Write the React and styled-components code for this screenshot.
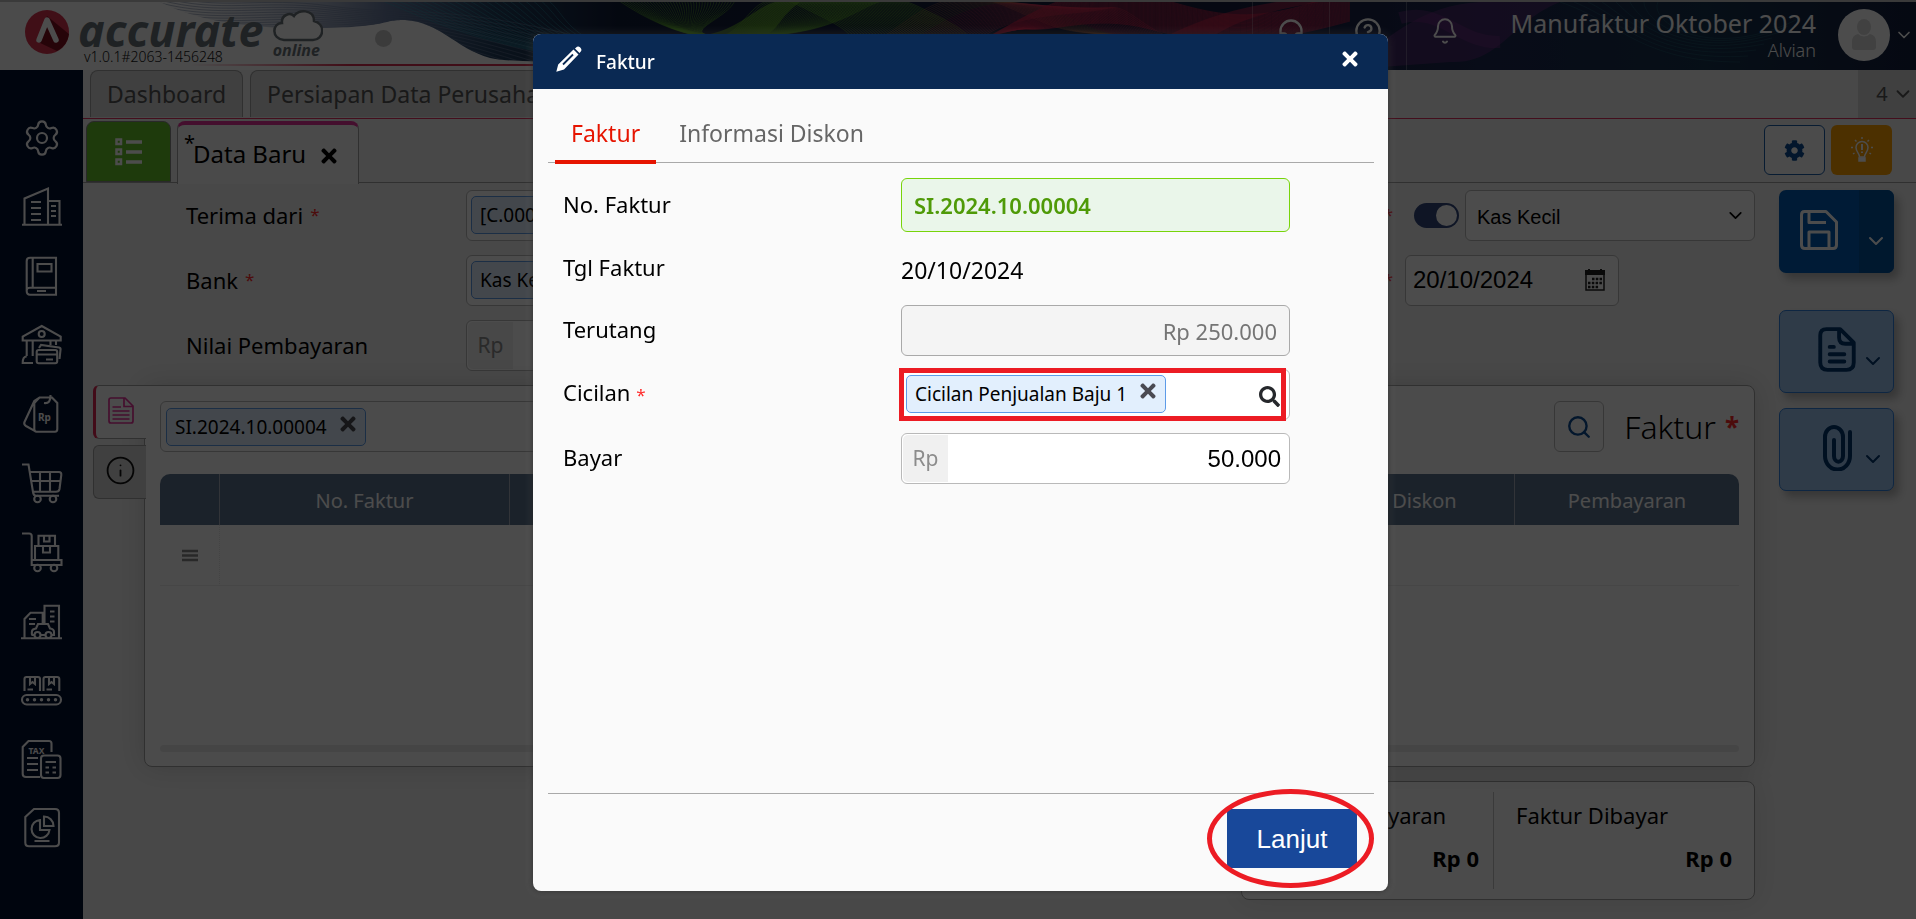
import React from "react";
import styled, { createGlobalStyle, css } from "styled-components";
import { Settings, ChevronDown, Bell, Headphones, CircleHelp, Search, Info } from "lucide-react";
import { FaTimes, FaSearch, FaCog } from "react-icons/fa";

const SANS = `"Noto Sans", "Open Sans", sans-serif`;
const ARIAL = `"Liberation Sans", Arial, sans-serif`;

const GlobalStyle = createGlobalStyle`
  *, *::before, *::after { box-sizing: border-box; }
  html, body { margin: 0; height: 100%; }
  body { font-family: ${SANS}; font-size: 22px; line-height: 30px; color: #000; background: #f1f1f1; overflow: hidden; }
  #root { height: 100%; }
  button, input, select { font: inherit; color: inherit; margin: 0; }
  button { border: 0; padding: 0; background: none; cursor: pointer; }
  a { color: inherit; text-decoration: none; }
  svg { display: block; flex: none; }
`;

/* ---------- page frame ---------- */

const Page = styled.div`
  min-height: 100%;
  display: flex;
  flex-direction: column;
`;
const Header = styled.header`
  position: relative;
  height: 70px;
  display: flex;
  justify-content: space-between;
  background: #fbfbfb;
  border-top: 2px solid #c2c2c2;
`;
const Banner = styled.svg`
  position: absolute;
  inset: 0;
  width: 100%;
  height: 68px;
`;
const Brand = styled.a`
  position: relative;
  display: grid;
  grid-template-columns: 44px auto auto;
  align-items: start;
  column-gap: 9px;
  padding: 8px 0 0 25px;
`;
const BrandText = styled.div`
  display: flex;
  flex-direction: column;
`;
const BrandName = styled.span`
  font: italic 700 45px/40px ${SANS};
  color: #6a7378;
`;
const Version = styled.span`
  padding-left: 6px;
  font-size: 14px;
  font-weight: 300;
  line-height: 14px;
  color: #111;
`;
const CloudBox = styled.span`
  display: flex;
  flex-direction: column;
  font: italic 700 16px/12px ${SANS};
  color: #6a7378;
  padding-right: 52px;
`;
const Dot = styled.span`
  width: 17px;
  height: 17px;
  margin-top: 28px;
  border-radius: 50%;
  background: #c6c6c6;
`;
const BrandGroup = styled.div`
  display: flex;
  position: relative;
`;
const HeaderRight = styled.div`
  position: relative;
  display: flex;
  align-items: stretch;
  color: #fff;
`;
const HeaderButton = styled.button`
  width: 77px;
  padding-bottom: 10px;
  display: flex;
  align-items: center;
  justify-content: center;
  border-left: 1px solid rgba(255, 255, 255, 0.25);
  &:last-of-type { border-right: 1px solid rgba(255, 255, 255, 0.25); }
`;
const Company = styled.div`
  display: flex;
  flex-direction: column;
  align-items: flex-end;
  padding: 5px 22px 0 28px;
  font-size: 25px;
  line-height: 33px;
`;
const UserName = styled.span`
  font-size: 18px;
  font-weight: 300;
  line-height: 20px;
`;
const Account = styled.button`
  display: flex;
  align-items: center;
  gap: 4px;
  padding: 0 2px 2px 0;
`;
const Avatar = styled.span`
  width: 52px;
  height: 52px;
  border-radius: 50%;
  background: #fff;
  display: flex;
  align-items: center;
  justify-content: center;
`;
const Body = styled.div`
  flex: 1;
  display: flex;
`;
const Sidebar = styled.nav`
  width: 83px;
  flex: none;
  background: #00112f;
  padding-top: 48px;
  display: flex;
  flex-direction: column;
  align-items: center;
  gap: 29px;
`;
const SideLink = styled.a`
  display: block;
  width: 40px;
  height: 40px;
  color: #fff;
  svg { overflow: visible; }
`;
const Main = styled.main`
  flex: 1;
  min-width: 0;
`;

/* ---------- tabs ---------- */

const PageTabs = styled.div`
  display: flex;
  height: 49px;
  padding-left: 7px;
  gap: 7px;
  border-bottom: 1px solid #e0305e;
`;
const PageTab = styled.a`
  height: 47px;
  padding: 8px 16px;
  border: 1px solid #a0a0a0;
  border-bottom: 0;
  border-radius: 8px 8px 0 0;
  background: #d6d6d6;
  color: #555;
  font-size: 23px;
`;
const TabCount = styled.button`
  margin-left: auto;
  width: 58px;
  height: 48px;
  padding-left: 16px;
  display: flex;
  align-items: center;
  justify-content: center;
  gap: 4px;
  background: #d6d6d6;
  color: #555;
  font-size: 20px;
`;
const DocBar = styled.div`
  display: flex;
  height: 64px;
  padding: 2px 24px 0 3px;
  border-bottom: 1px solid #a0a0a0;
`;
const ListTab = styled.button`
  width: 85px;
  height: 61px;
  display: flex;
  align-items: center;
  justify-content: center;
  border: 1px solid #8a8a8a;
  border-radius: 8px 8px 0 0;
  background: #65c12b;
`;
const DocTab = styled.div`
  width: 182px;
  height: 63px;
  margin: 0 auto -1px 6px;
  padding: 8px 18px 0 6px;
  display: flex;
  background: #f9f9f9;
  border: 1px solid #a0a0a0;
  border-top: 4px solid #e5329a;
  border-bottom: 0;
  border-radius: 8px 8px 0 0;
  font-size: 24px;
  button { margin: 8px 0 0 auto; height: 30px; }
`;
const Unsaved = styled.span`
  width: 9px;
  line-height: 20px;
  font-size: 20px;
`;
const DocName = styled.span`
  padding-top: 3px;
  line-height: 36px;
`;
const ToolButton = styled.button`
  width: 61px;
  height: 50px;
  margin: 4px 0 0 6px;
  display: flex;
  align-items: center;
  justify-content: center;
  border-radius: 6px;
  ${(p) => (p.$warm
    ? css`background: #ffa100; color: #fff;`
    : css`border: 1px solid #1c5ea8; background: #fafafa; color: #0a4c94;`)}
`;

/* ---------- document ---------- */

const Doc = styled.div`
  display: flex;
  gap: 24px;
  padding: 7px 22px 0 10px;
`;
const DocMain = styled.div`
  flex: 1;
  min-width: 0;
`;
const Form = styled.div`
  display: grid;
  grid-template-columns: 280px minmax(0, 1fr) 200px 350px;
  row-gap: 14px;
  padding-left: 93px;
`;
const FieldLabel = styled.label`
  height: 51px;
  display: flex;
  align-items: center;
  padding: ${(p) => (p.$end ? "0 12px 2px 40px" : "0 0 2px")};
  justify-content: ${(p) => (p.$end ? "space-between" : "flex-start")};
  gap: 7px;
`;
const Star = styled.span`
  color: #ff2a2a;
  font-size: ${(p) => (p.$big ? "26px" : "17px")};
  font-weight: ${(p) => (p.$big ? 700 : 400)};
`;
const Control = styled.div`
  display: flex;
  align-items: center;
  height: 51px;
  width: ${(p) => p.$width || "auto"};
  padding: ${(p) => (p.$flush ? "1px" : "0 4px 2px")};
  border: 1px solid #b9b9b9;
  border-radius: 6px;
  background: #fff;
`;
const PlainInput = styled.input`
  flex: 1;
  min-width: 0;
  width: 100%;
  border: 0;
  outline: 0;
  padding: ${(p) => p.$pad || "0"};
  background: transparent;
  font-family: ${ARIAL};
  font-size: 24px;
  text-align: ${(p) => (p.$right ? "right" : "left")};
`;
const Chip = styled.span`
  display: flex;
  align-items: center;
  gap: 10px;
  height: 38px;
  padding: 0 6px 0 8px;
  border: 1px solid #5d9be8;
  border-radius: 5px;
  background: #e2effd;
  font-size: 19px;
  white-space: nowrap;
  svg { color: #4a4a52; margin-bottom: 5px; }
`;
const Prefix = styled.span`
  align-self: stretch;
  width: 45px;
  padding-bottom: 2px;
  display: flex;
  align-items: center;
  justify-content: center;
  border-radius: 5px 0 0 5px;
  background: #f0f0f0;
  color: #8c8c8c;
  font-size: 21px;
`;
const Inline = styled.div`
  display: flex;
  align-items: center;
  gap: 6px;
  padding-left: 9px;
`;
const Toggle = styled.input`
  appearance: none;
  width: 45px;
  height: 25px;
  flex: none;
  border-radius: 13px;
  background: #32497e;
  display: flex;
  justify-content: flex-end;
  align-items: center;
  padding-right: 2px;
  &::after {
    content: "";
    width: 21px;
    height: 21px;
    border-radius: 50%;
    background: #fff;
  }
`;
const SelectBox = styled.div`
  flex: 1;
  display: grid;
  align-items: center;
  > * { grid-area: 1 / 1; }
  svg { justify-self: end; margin-right: 9px; pointer-events: none; }
`;
const Select = styled.select`
  appearance: none;
  width: 100%;
  height: 51px;
  padding: 2px 11px 0;
  border: 1px solid #b9b9b9;
  border-radius: 6px;
  background: #fff;
  font-family: ${ARIAL};
  font-size: 20px;
`;
const CalendarButton = styled.button`
  margin-right: 9px;
`;

/* ---------- lines panel ---------- */

const PanelArea = styled.div`
  display: flex;
  margin-top: 14px;
`;
const SideTabs = styled.div`
  position: relative;
  width: 53px;
  margin-right: -2px;
  display: flex;
  flex-direction: column;
  gap: 6px;
`;
const SideTab = styled.button`
  height: 54px;
  padding-bottom: 4px;
  display: flex;
  align-items: center;
  justify-content: center;
  border: 1px solid #a0a0a0;
  border-right: 0;
  border-radius: 6px 0 0 6px;
  background: #d6d6d6;
  color: #111;
  ${(p) => p.$active && css`background: #fafafa; border-left: 3px solid #dd2550;`}
`;
const Panel = styled.section`
  flex: 1;
  min-width: 0;
  height: 382px;
  padding: 15px 15px 14px;
  display: flex;
  flex-direction: column;
  border: 1px solid #a0a0a0;
  border-radius: 0 8px 8px 8px;
  background: #fbfbfb;
  box-shadow: 0 0 28px rgba(0, 0, 0, 0.14);
`;
const PanelTop = styled.div`
  display: flex;
  align-items: center;
  gap: 20px;
  margin-bottom: 22px;
`;
const PickBox = styled.div`
  width: 50%;
  display: flex;
  align-items: center;
  height: 51px;
  padding: 0 5px;
  border: 1px solid #b9b9b9;
  border-radius: 6px;
`;
const SearchButton = styled.button`
  width: 50px;
  height: 51px;
  margin-left: auto;
  display: flex;
  align-items: center;
  justify-content: center;
  border: 1px solid #b9b9b9;
  border-radius: 6px;
  color: #0a4c94;
`;
const PanelTitle = styled.h2`
  margin: 0;
  display: flex;
  gap: 9px;
  font-size: 32px;
  font-weight: 300;
  line-height: 44px;
`;
const Table = styled.table`
  width: 100%;
  border-collapse: separate;
  border-spacing: 0;
  table-layout: fixed;
  th {
    height: 51px;
    padding: 3px 0 0;
    background: #5d748e;
    color: #fff;
    font-size: 20px;
    font-weight: 400;
  }
  th + th { border-left: 1px solid #a7b0bb; }
  th:first-child { border-radius: 10px 0 0 0; }
  th:last-child { border-radius: 0 10px 0 0; }
  td { height: 61px; padding: 0; border-bottom: 1px solid #eaeaea; }
  td + td { border-left: 1px dotted #e4e4e4; }
  td svg { margin: 0 auto; }
`;
const ScrollTrack = styled.div`
  height: 7px;
  margin-top: auto;
  border-radius: 4px;
  background: #e8e8e8;
`;
const Summary = styled.section`
  display: grid;
  grid-template-columns: 251px 1fr;
  width: 514px;
  height: 119px;
  margin: 14px 0 0 auto;
  padding: 10px 0;
  border: 1px solid #a0a0a0;
  border-radius: 8px;
  background: #fbfbfb;
  box-shadow: 0 0 28px rgba(0, 0, 0, 0.1);
`;
const SumCell = styled.div`
  display: flex;
  flex-direction: column;
  gap: 13px;
  padding: 8px 14px 0 22px;
  & + & { border-left: 1px solid #c4c4c4; padding-right: 22px; }
  strong { align-self: flex-end; }
`;
const Actions = styled.aside`
  width: 115px;
  display: flex;
  flex-direction: column;
  gap: 15px;
`;
const SaveButton = styled.div`
  display: flex;
  height: 83px;
  margin-bottom: 22px;
  border-radius: 7px;
  overflow: hidden;
  background: #005cb4;
  color: #fff;
  box-shadow: 5px 6px 8px rgba(0, 0, 0, 0.25);
  button { display: flex; align-items: center; justify-content: center; }
  button:first-child { width: 80px; padding-bottom: 3px; }
  button:last-child { flex: 1; padding: 18px 2px 0 0; background: #00509b; }
`;
const SideButton = styled.button`
  height: 83px;
  display: flex;
  align-items: center;
  justify-content: flex-end;
  gap: 5px;
  padding-right: 8px;
  border: 1px solid #2f80dc;
  border-radius: 7px;
  background: #9ec6f2;
  color: #00366f;
  box-shadow: 5px 6px 8px rgba(0, 0, 0, 0.25);
  > svg:first-child { margin-bottom: 4px; }
  > svg:last-child { margin-top: 18px; }
`;

/* ---------- dialog ---------- */

const Overlay = styled.div`
  position: fixed;
  inset: 0;
  display: flex;
  justify-content: center;
  align-items: flex-start;
  padding: 34px 0 0 5px;
  background: rgba(0, 0, 0, 0.7);
`;
const Dialog = styled.section`
  width: 855px;
  max-width: 96%;
  border-radius: 8px;
  overflow: hidden;
  background: #fafafa;
  box-shadow: 0 0 10px rgba(255, 255, 255, 0.12), 0 0 6px rgba(0, 0, 0, 0.6);
`;
const DialogHead = styled.header`
  display: flex;
  align-items: center;
  gap: 14px;
  height: 55px;
  padding: 0 27px 0 23px;
  background: #0a2953;
  color: #fff;
  h1 { margin: 0; font-size: 19px; font-weight: 500; }
  > svg { margin-bottom: 6px; }
  button { margin-left: auto; padding-bottom: 5px; }
`;
const DialogBody = styled.div`
  display: flex;
  flex-direction: column;
  padding: 0 14px 23px 15px;
`;
const DialogTabs = styled.div`
  display: flex;
  gap: 7px;
  height: 74px;
  padding: 18px 0 0 7px;
  border-bottom: 1px solid #a9a9a9;
`;
const DialogTab = styled.button`
  height: 57px;
  padding: 0 16px 2px;
  border-bottom: 4px solid transparent;
  color: #666;
  font-size: 23px;
  ${(p) => p.$active && css`color: #e61400; border-color: #e61400;`}
`;
const DialogForm = styled.div`
  display: flex;
  flex-direction: column;
  gap: 13px;
  min-height: 631px;
  padding: 15px 84px 0 15px;
  border-bottom: 1px solid #a9a9a9;
`;
const Row = styled.div`
  display: grid;
  grid-template-columns: minmax(0, 1fr) 389px;
  align-items: center;
  > label { padding-bottom: 3px; }
`;
const NumberInput = styled.input`
  width: 100%;
  height: 54px;
  padding: 0 12px;
  border: 1px solid #77d40a;
  border-radius: 6px;
  background: #eaf6ea;
  color: #4f9a08;
  font-weight: 600;
`;
const OwedInput = styled.input`
  width: 100%;
  height: 51px;
  padding: 0 12px;
  border: 1px solid #a9a9a9;
  border-radius: 6px;
  background: #f4f4f4;
  color: #757575;
  text-align: right;
`;
const DateText = styled.output`
  height: 47px;
  font-size: 23px;
  line-height: 50px;
`;
const Marked = styled.div`
  position: relative;
`;
const MarkBox = styled.span`
  position: absolute;
  inset: -1px 4px -1px -2px;
  border: 5px solid #ec1c24;
  pointer-events: none;
`;
const LookupButton = styled.button`
  margin-left: auto;
  padding: 6px 5px 0 0;
  color: #26282c;
`;
const DialogFoot = styled.footer`
  display: flex;
  justify-content: flex-end;
  padding: 15px 17px 0;
`;
const NextButton = styled.button`
  width: 130px;
  height: 59px;
  border-radius: 4px;
  background: #18489a;
  color: #fff;
  font-family: ${ARIAL};
  font-size: 26px;
`;
const MarkRing = styled.span`
  position: absolute;
  inset: -20px -17px -20px -20px;
  border: 5px solid #ec1c24;
  border-radius: 50%;
  pointer-events: none;
`;

/* ---------- drawings ---------- */

const lines = (n, make) => Array.from({ length: n }, (_, i) => make(i));

function BannerArt() {
  return (
    <Banner viewBox="0 0 1916 68" preserveAspectRatio="none" aria-hidden="true">
      <defs>
        <linearGradient id="sea" gradientUnits="userSpaceOnUse" x1="160" x2="1916" y1="0" y2="0">
          <stop offset="0" stopColor="#b8bfce" stopOpacity="0" />
          <stop offset="0.06" stopColor="#a8b2c8" stopOpacity="0.5" />
          <stop offset="0.13" stopColor="#65779c" />
          <stop offset="0.19" stopColor="#23405f" />
          <stop offset="0.26" stopColor="#101c38" />
          <stop offset="0.6" stopColor="#161c3c" />
          <stop offset="0.75" stopColor="#1c2850" />
          <stop offset="0.88" stopColor="#17324e" />
          <stop offset="1" stopColor="#131f3e" />
        </linearGradient>
        <linearGradient id="rule" x1="0" x2="1" y1="0" y2="0">
          <stop offset="0" stopColor="#e03050" stopOpacity="0" />
          <stop offset="0.4" stopColor="#d83050" />
        </linearGradient>
        <clipPath id="shore">
          <path d="M160 0C200 20 250 27 320 26S380 18 405 18C440 20 455 46 490 56C505 60 540 58 580 62C700 70 900 68 1100 68H1916V0Z" />
        </clipPath>
      </defs>
      <rect x="190" y="62" width="400" height="2" fill="url(#rule)" />
      <g clipPath="url(#shore)" fill="none">
        <rect x="160" width="1756" height="68" fill="url(#sea)" />
        {lines(12, (i) => (
          <path key={`a${i}`} d={`M160 ${-8 + i * 3}C220 ${10 + i * 2} 260 ${-6 + i * 3} 330 ${4 + i * 2}S450 ${i * 4} 600 ${40 + i * 5}`} stroke="#6c7c9c" strokeOpacity="0.5" />
        ))}
        {lines(22, (i) => (
          <path key={`t${i}`} d={`M${380 + i * 8} -2C${420 + i * 7} 14 ${460 + i * 5} 34 ${540 + i * 4} 50`} stroke="#2fa0b4" strokeOpacity="0.4" />
        ))}
        {lines(40, (i) => (
          <path key={`g${i}`} d={`M${618 + i * 3} -2C${650 + i * 2} 20 ${690 - i} 38 ${720 + i} 34S${750 + i * 3} -20 ${800 + i * 3} 4S${850 + i * 3} 30 ${860 + i * 3} 50`} stroke="#6fc52f" strokeOpacity="0.45" />
        ))}
        <path d="M700 34C740 28 750 8 775 0H800C775 18 780 32 755 36Z" fill="#69b02c" fillOpacity="0.6" />
        {lines(34, (i) => (
          <path key={`r${i}`} d={`M${885 + i * 3} 34C${920 + i * 3} 10 ${950 + i * 4} ${-20 + i} ${1010 + i * 3} 6S${1060 + i * 3} ${30 + i} ${1150 + i * 3} 34`} stroke={i < 12 ? "#b06a4a" : "#d83a5c"} strokeOpacity="0.4" />
        ))}
        {lines(34, (i) => (
          <path key={`s${i}`} d={`M${990 + i} ${34 - i / 4}C1050 ${i} 1090 ${-22 + i} 1150 ${i - 6}S1250 ${30 + i / 2} 1350 ${-14 + i}`} stroke="#d8264e" strokeOpacity="0.5" />
        ))}
        <path d="M1170 68C1220 20 1260 10 1330 -2H1290C1230 6 1180 20 1110 68Z" fill="#d8264e" fillOpacity="0.5" />
        <path d="M1340 68C1400 30 1420 4 1480 0H1560C1510 20 1500 62 1450 60Z" fill="#7c2f8c" fillOpacity="0.4" />
        <path d="M1400 16C1440 4 1460 42 1500 40" stroke="#7c2f8c" strokeWidth="12" strokeOpacity="0.4" />
        {lines(8, (i) => (
          <path key={`p${i}`} d={`M${1560 + i * 14} 0C${1620 + i * 4} 20 ${1640 + i * 10} 60 ${1740 + i * 8} ${60 - i * 6}`} stroke="#2f8a94" strokeOpacity="0.25" />
        ))}
      </g>
    </Banner>
  );
}

const LogoMark = () => (
  <svg width="44" height="44" viewBox="0 0 44 44" aria-hidden="true">
    <circle cx="22" cy="22" r="22" fill="#d8324e" />
    <path d="M22 6L44 24A22 22 0 0 1 32 41L11 31Z" fill="#7f1020" />
    <path d="M14 30L22 10L31 30" fill="none" stroke="#fff" strokeWidth="5.500" strokeLinecap="round" strokeLinejoin="round" />
  </svg>
);

const Cloud = () => (
  <svg width="50" height="34" viewBox="0 0 50 34" aria-hidden="true">
    <path d="M11 30C-2 29-1 13 9 13C8 5 17 2 21 6C25-1 41-1 41 11C53 14 51 30 40 30Z" fill="#fff" stroke="#6a7378" strokeWidth="2.500" />
  </svg>
);

const SIDE_ICONS = [
  ["Perusahaan", <path d="M2.500 37.500V11.500L26 1.500V37.500M26 14H37.500V37.500M0 37.700H40M9 15H19M9 21H19M9 27H19M9 33H19M29 19H34M29 24H34M29 29H34" />],
  ["Buku Besar", <path d="M8 1.700H34V38.700H8Q4.700 38.700 4.700 35V5Q4.700 1.700 8 1.700ZM10.700 1.700V31.700M34 31.700H8Q5 31.700 4.700 34M15.500 8H29.500V15.500H15.500ZM15 35H24" />],
  ["Kas & Bank", <><path d="M19.700 1L38.700 11.500V15.500H.7V11.500ZM4.700 16V31M10.700 16V31M4.700 31.500Q.7 31.500 .7 38H11M28.500 16V20M34 16V20M17 23L19 20L37 22.500Q39 23 38.500 25L37.500 34" /><rect x="14.700" y="25" width="20.500" height="13.300" rx="2" /><path d="M14.700 29.500H35M24 34.500H31" /><circle cx="19.700" cy="9" r="3" /></>],
  ["Penjualan", <><path d="M17.500 3.500H30L35.300 9V35Q35.300 37.700 33 37.700H14.500Q12.300 37.700 12.300 35V9ZM17.500 3.500L12.300 7L2.500 28Q1.500 30.500 4 32L14 37.700M22 9Q29 10 28.500 1" /><text x="16" y="26.500" fontSize="10" fontWeight="700" fontFamily="Noto Sans" fill="currentColor" stroke="none">Rp</text></>],
  ["Pembelian", <><path d="M0 1.500H6.500L11 29Q11.500 32.700 14 32.700H37M7.700 9H37Q39.500 9 39.300 12L37.500 26Q37 28.700 34 28.700H11M9 18H38.500M18 9V28.700M28 9V28.700" /><circle cx="15.500" cy="36" r="3.300" /><circle cx="31" cy="36" r="3.300" /></>],
  ["Persediaan", <><path d="M0 1.500H7Q9.700 1.500 9.700 4V28M16.500 14V3.700H33V14M22 3.700V9.500H27.500V3.700M13 28V14H36.300V28M21 14V20.500H28V14M9.700 28H39.500V33H9.700Z" /><circle cx="15.500" cy="36" r="3.300" /><circle cx="32" cy="36" r="3.300" /></>],
  ["Aset Tetap", <><path d="M-1 37.300H40M2.500 37V18L8.500 11.700H20.700V22M22.500 22V4.700H37V37M7 18H14M7 23H13M28 10.500H32.500M28 15.500H32.500M28 20.500H32.500M12 34H10.500Q9.500 34 10 30Q10.500 28 14 27.500L16 23H26L28 27.500Q32 28 32 31V34H30M18.500 34H23" /><circle cx="15.500" cy="34" r="3" /><circle cx="26.500" cy="34" r="3" /></>],
  ["Manufaktur", <><path d="M2.500 21V9Q2.500 7 4.500 7H16Q18 7 18 9V21M21.500 21V9Q21.500 7 23.500 7H35Q37.300 7 37.300 9V21M8 7V14L10.500 12L13 14V7M27 7V14L29.500 12L32 14V7M5.500 19.500H11M24.500 19.500H30" /><rect x="0" y="25" width="39" height="9.500" rx="4.700" /><path d="M5.500 29.700H34" strokeWidth="3.500" strokeLinecap="round" strokeDasharray="0 7" /></>],
  ["Pajak", <><path d="M18 38H4Q.7 38 .7 35V8L6.500 2H27Q29.500 2 29.500 4.500V13M5 19H16M5 25H16M5 31H16" /><rect x="19" y="16.500" width="19.500" height="22.500" rx="3" /><path d="M23.500 23H34M23.500 28.500H27M30.500 28.500H34M23.500 33.500H27M30.500 33.500H34" /><text x="6.500" y="14.500" fontSize="8.500" fontWeight="700" fontFamily="Noto Sans" fill="currentColor" stroke="none">TAX</text></>],
  ["Laporan", <path d="M12 1H33Q37 1 37 5V34.500Q37 38.300 33 38.300H7Q3.300 38.300 3.300 34.500V9ZM18 12A9 9 0 1 0 27.500 22H18ZM22 8.500A9.500 9.500 0 0 1 31.500 18H22ZM12.500 33H27.500" />],
];

const ListIcon = () => (
  <svg width="28" height="28" viewBox="0 0 28 28" fill="none" stroke="#fff" aria-hidden="true">
    <path d="M1.500 1.500H6V6H1.500ZM1.500 11.500H6V16H1.500ZM1.500 21.500H6V26H1.500Z" strokeWidth="2.500" />
    <path d="M11 4H27M11 14H27M11 24H27" strokeWidth="3.500" />
  </svg>
);

const BulbIcon = () => (
  <svg width="24" height="26" viewBox="0 0 24 26" fill="none" stroke="currentColor" strokeWidth="1.500" aria-hidden="true">
    <path d="M9.500 20C9.500 16 6 15 6 10.500A6 6 0 0 1 18 10.500C18 15 14.500 16 14.500 20ZM12 0V2M5 3L6.500 4.500M19 3L17.500 4.500M1 10.500H3M23 10.500H21M3 17L4.500 16M21 17L19.500 16" />
    <path d="M9.500 21.500H14.500V23.500H9.500Z" strokeWidth="2.500" />
    <path d="M12 7V13M12 14.500V16" strokeWidth="2" />
  </svg>
);

const CalendarIcon = () => (
  <svg width="20" height="22" viewBox="0 0 20 22" aria-hidden="true">
    <path d="M1 3V21H19V3" fill="none" stroke="#222" strokeWidth="1.500" />
    <path d="M0 1H3V0H5V1H15V0H17V1H20V6H0Z" fill="#222" />
    <path d="M7 10H17M3 14H17M3 18H14" stroke="#222" strokeWidth="2.500" strokeDasharray="2.500 1.300" />
  </svg>
);

const SaveIcon = () => (
  <svg width="38" height="40" viewBox="0 0 38 40" fill="none" stroke="currentColor" strokeWidth="3" strokeLinejoin="round" aria-hidden="true">
    <path d="M4.500 1.500H26L36.500 12V35Q36.500 38.500 33 38.500H5Q1.500 38.500 1.500 35V5Q1.500 1.500 4.500 1.500ZM9 2V12.500H26M9 38V22H29V38" />
  </svg>
);

const PaperIcon = () => (
  <svg width="38" height="45" viewBox="0 0 36 43" fill="none" stroke="currentColor" strokeWidth="3.700" strokeLinejoin="round" strokeLinecap="round" aria-hidden="true">
    <path d="M8 2H21L34 15V34Q34 41 27 41H9Q2 41 2 34V8Q2 2 8 2ZM20 2V10Q20 16 26 16H34M11 19H15M11 26H25M11 33H25" />
  </svg>
);

const ClipIcon = () => (
  <svg width="38" height="46" viewBox="0 0 38 46" fill="none" stroke="currentColor" strokeWidth="4" strokeLinecap="round" aria-hidden="true">
    <path d="M32 7V31A12 13 0 0 1 7 31V12A9 10 0 0 1 25 12V31A4 5 0 0 1 16 31V15" />
  </svg>
);

const PageIcon = () => (
  <svg width="26" height="27" viewBox="0 0 26 27" fill="none" stroke="#e5329a" strokeWidth="1.700" aria-hidden="true">
    <path d="M3 1H17L25 9V24Q25 26 23 26H3Q1 26 1 24V3Q1 1 3 1ZM16 1V9.500H25M4.500 10H13M4.500 14H21.500M4.500 18H21.500M4.500 22H21.500" />
  </svg>
);

const PencilIcon = () => (
  <svg width="26" height="26" viewBox="0 0 26 26" aria-hidden="true">
    <path d="M19 2.500L21 .8Q22.500 0 24 1.200L25 2.500Q26 4 25 5.200L23.500 7ZM17.500 3.500L22.500 8.500L8 23.500L.3 25.800L2.200 18.500Z" fill="#fff" />
    <path d="M17 8.500L7 18.500" fill="none" stroke="#0a2953" strokeWidth="1.800" />
  </svg>
);

const RowHandle = () => (
  <svg width="16" height="13" viewBox="0 0 16 13" stroke="#888" strokeWidth="2.500" aria-hidden="true">
    <path d="M0 2H16M0 6.500H16M0 11H16" />
  </svg>
);

const UserShape = () => (
  <svg width="26" height="32" viewBox="0 0 26 32" fill="#d9d9d9" aria-hidden="true">
    <ellipse cx="13" cy="8" rx="7" ry="8" />
    <path d="M1 28V23Q1 16 7 15Q13 20 19 15Q25 16 25 23V28Q25 31 22 31H4Q1 31 1 28Z" />
  </svg>
);

const CloseIcon = () => <FaTimes size={22} />;

/* ---------- app ---------- */

export default function App() {
  return (
    <>
      <GlobalStyle />
      <Page>
        <Header>
          <BannerArt />
          <BrandGroup>
            <Brand href="#home">
              <LogoMark />
              <BrandText>
                <BrandName>accurate</BrandName>
                <Version>v1.0.1#2063-1456248</Version>
              </BrandText>
              <CloudBox><Cloud />online</CloudBox>
            </Brand>
            <Dot />
          </BrandGroup>
          <HeaderRight>
            <HeaderButton aria-label="Layanan"><Headphones size={28} /></HeaderButton>
            <HeaderButton aria-label="Bantuan"><CircleHelp size={28} /></HeaderButton>
            <HeaderButton aria-label="Notifikasi"><Bell size={28} strokeWidth={1.7} /></HeaderButton>
            <Company>Manufaktur Oktober 2024<UserName>Alvian</UserName></Company>
            <Account aria-label="Akun">
              <Avatar><UserShape /></Avatar>
              <ChevronDown size={20} />
            </Account>
          </HeaderRight>
        </Header>

        <Body>
          <Sidebar>
            <SideLink href="#pengaturan" aria-label="Pengaturan">
              <Settings size={40} strokeWidth={1.3} />
            </SideLink>
            {SIDE_ICONS.map(([name, art]) => (
              <SideLink key={name} href="#menu" aria-label={name}>
                <svg width="40" height="40" viewBox="0 0 40 40" fill="none" stroke="currentColor" strokeWidth="2.100">{art}</svg>
              </SideLink>
            ))}
          </Sidebar>

          <Main>
            <PageTabs>
              <PageTab href="#dashboard">Dashboard</PageTab>
              <PageTab href="#persiapan">Persiapan Data Perusahaan</PageTab>
              <TabCount>4<ChevronDown size={22} /></TabCount>
            </PageTabs>
            <DocBar>
              <ListTab aria-label="Daftar"><ListIcon /></ListTab>
              <DocTab>
                <Unsaved>*</Unsaved>
                <DocName>Data Baru</DocName>
                <button aria-label="Tutup tab"><CloseIcon /></button>
              </DocTab>
              <ToolButton aria-label="Atur"><FaCog size={21} /></ToolButton>
              <ToolButton $warm aria-label="Tips"><BulbIcon /></ToolButton>
            </DocBar>

            <Doc>
              <DocMain>
                <Form>
                  <FieldLabel htmlFor="from">Terima dari <Star>*</Star></FieldLabel>
                  <Control><Chip>[C.00001]</Chip><PlainInput id="from" /></Control>
                  <FieldLabel htmlFor="method" $end>Metode <Star>*</Star></FieldLabel>
                  <Inline>
                    <Toggle type="checkbox" defaultChecked aria-label="Otomatis" />
                    <SelectBox>
                      <Select id="method" defaultValue="Kas Kecil"><option>Kas Kecil</option></Select>
                      <ChevronDown size={21} />
                    </SelectBox>
                  </Inline>

                  <FieldLabel htmlFor="bank">Bank <Star>*</Star></FieldLabel>
                  <Control><Chip>Kas Kecil</Chip><PlainInput id="bank" /></Control>
                  <FieldLabel htmlFor="date" $end>Tanggal <Star>*</Star></FieldLabel>
                  <Control $width="214px">
                    <PlainInput id="date" defaultValue="20/10/2024" $pad="0 0 0 3px" />
                    <CalendarButton aria-label="Pilih tanggal"><CalendarIcon /></CalendarButton>
                  </Control>

                  <FieldLabel htmlFor="value">Nilai Pembayaran</FieldLabel>
                  <Control $flush><Prefix>Rp</Prefix><PlainInput id="value" $right /></Control>
                </Form>

                <PanelArea>
                  <SideTabs>
                    <SideTab $active aria-label="Rincian"><PageIcon /></SideTab>
                    <SideTab aria-label="Info"><Info size={31} strokeWidth={1.4} /></SideTab>
                  </SideTabs>
                  <Panel>
                    <PanelTop>
                      <PickBox>
                        <Chip>SI.2024.10.00004 <CloseIcon /></Chip>
                      </PickBox>
                      <SearchButton aria-label="Cari"><Search size={26} strokeWidth={2.2} /></SearchButton>
                      <PanelTitle>Faktur <Star $big>*</Star></PanelTitle>
                    </PanelTop>
                    <Table>
                      <colgroup>
                        <col style={{ width: 59 }} />
                        <col style={{ width: 290 }} />
                        <col />
                        <col style={{ width: 180 }} />
                        <col style={{ width: 225 }} />
                      </colgroup>
                      <thead>
                        <tr><th aria-label="Urutan" /><th>No. Faktur</th><th>Terutang</th><th>Diskon</th><th>Pembayaran</th></tr>
                      </thead>
                      <tbody>
                        <tr><td><RowHandle /></td><td colSpan={4} /></tr>
                      </tbody>
                    </Table>
                    <ScrollTrack />
                  </Panel>
                </PanelArea>

                <Summary>
                  <SumCell>Nilai Pembayaran<strong>Rp 0</strong></SumCell>
                  <SumCell>Faktur Dibayar<strong>Rp 0</strong></SumCell>
                </Summary>
              </DocMain>

              <Actions>
                <SaveButton>
                  <button aria-label="Simpan"><SaveIcon /></button>
                  <button aria-label="Pilihan simpan"><ChevronDown size={24} /></button>
                </SaveButton>
                <SideButton aria-label="Dokumen"><PaperIcon /><ChevronDown size={24} /></SideButton>
                <SideButton aria-label="Lampiran"><ClipIcon /><ChevronDown size={24} /></SideButton>
              </Actions>
            </Doc>
          </Main>
        </Body>
      </Page>

      <Overlay>
        <Dialog role="dialog" aria-modal="true" aria-labelledby="dlg-title">
          <DialogHead>
            <PencilIcon />
            <h1 id="dlg-title">Faktur</h1>
            <button aria-label="Tutup"><CloseIcon /></button>
          </DialogHead>
          <DialogBody>
            <DialogTabs>
              <DialogTab $active>Faktur</DialogTab>
              <DialogTab>Informasi Diskon</DialogTab>
            </DialogTabs>
            <DialogForm>
              <Row>
                <label htmlFor="inv-no">No. Faktur</label>
                <NumberInput id="inv-no" readOnly value="SI.2024.10.00004" />
              </Row>
              <Row>
                <label htmlFor="inv-date">Tgl Faktur</label>
                <DateText id="inv-date">20/10/2024</DateText>
              </Row>
              <Row>
                <label htmlFor="owed">Terutang</label>
                <OwedInput id="owed" readOnly value="Rp 250.000" />
              </Row>
              <Row>
                <label htmlFor="term">Cicilan <Star>*</Star></label>
                <Marked>
                  <Control>
                    <Chip>Cicilan Penjualan Baju 1 <CloseIcon /></Chip>
                    <PlainInput id="term" />
                    <LookupButton aria-label="Cari cicilan"><FaSearch size={21} /></LookupButton>
                  </Control>
                  <MarkBox />
                </Marked>
              </Row>
              <Row>
                <label htmlFor="pay">Bayar</label>
                <Control $flush>
                  <Prefix>Rp</Prefix>
                  <PlainInput id="pay" defaultValue="50.000" $right $pad="0 7px 0 0" />
                </Control>
              </Row>
            </DialogForm>
            <DialogFoot>
              <Marked>
                <NextButton>Lanjut</NextButton>
                <MarkRing />
              </Marked>
            </DialogFoot>
          </DialogBody>
        </Dialog>
      </Overlay>
    </>
  );
}
